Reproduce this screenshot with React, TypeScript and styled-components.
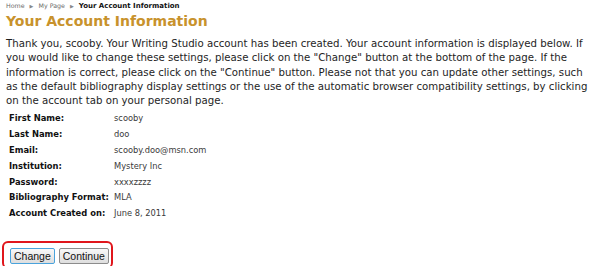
import React from "react";
import styled, { createGlobalStyle } from "styled-components";

const Global = createGlobalStyle`
  html, body { margin: 0; padding: 0; background: #fff; }
  body { font-family: "DejaVu Sans", Verdana, sans-serif; color: #111; }
`;

const Page = styled.div`
  padding: 0 6px 0 6px;
  width: 600px;
  box-sizing: border-box;
`;

const Crumbs = styled.nav`
  display: flex;
  align-items: baseline;
  height: 11px;
  padding-left: 0;
  font-family: "DejaVu Sans", Tahoma, sans-serif;
  line-height: 11px;
`;

const Crumb = styled.span<{ $current?: boolean }>`
  font-size: ${(p) => (p.$current ? "7px" : "6.3px")};
  font-weight: ${(p) => (p.$current ? 700 : 400)};
  color: ${(p) => (p.$current ? "#111" : "#6a6a6a")};
`;

const Sep = styled.span`
  font-size: 5px;
  color: #888;
  margin: 0 5px;
`;

const Title = styled.h1`
  margin: 1px 0 0;
  font-size: 14px;
  line-height: 18px;
  font-weight: 700;
  color: #c8922c;
`;

const Intro = styled.p`
  margin: 7px 0 0;
  font-size: 10.2px;
  line-height: 14.3px;
  color: #1e1e1e;
  white-space: nowrap;
`;

const Info = styled.dl`
  display: grid;
  grid-template-columns: 105px auto;
  margin: 3px 0 0 3px;
  font-size: 8.4px;
  line-height: 15.8px;
`;

const Label = styled.dt`
  font-weight: 700;
  color: #111;
`;

const Value = styled.dd`
  margin: 0;
  font-size: 8.3px;
  color: #3a3a3a;
`;

const ButtonBox = styled.div`
  display: inline-flex;
  gap: 4px;
  margin: 19px 0 0 -4px;
  padding: 5px 2px 3px 6px;
  border: 2px solid #e0161c;
  border-radius: 6px;
`;

const Button = styled.button<{ $focused?: boolean }>`
  font-family: "Liberation Sans", Arial, sans-serif;
  font-size: 10.5px;
  line-height: 14px;
  height: 16px;
  padding: 0 3px;
  color: #111;
  background: linear-gradient(#f8f8f8, #dedede);
  border: 1px solid ${(p) => (p.$focused ? "#4aa3dc" : "#8c8c8c")};
  border-radius: 2px;
`;

const rows: [string, string][] = [
  ["First Name:", "scooby"],
  ["Last Name:", "doo"],
  ["Email:", "scooby.doo@msn.com"],
  ["Institution:", "Mystery Inc"],
  ["Password:", "xxxxzzzz"],
  ["Bibliography Format:", "MLA"],
  ["Account Created on:", "June 8, 2011"],
];

const lines = [
  "Thank you, scooby. Your Writing Studio account has been created. Your account information is displayed below. If",
  'you would like to change these settings, please click on the "Change" button at the bottom of the page. If the',
  'information is correct, please click on the "Continue" button. Please not that you can update other settings, such',
  "as the default bibliography display settings or the use of the automatic browser compatibility settings, by clicking",
  "on the account tab on your personal page.",
];

export default function App() {
  return (
    <Page>
      <Global />
      <Crumbs>
        <Crumb>Home</Crumb>
        <Sep>▶</Sep>
        <Crumb>My Page</Crumb>
        <Sep>▶</Sep>
        <Crumb $current>Your Account Information</Crumb>
      </Crumbs>
      <Title>Your Account Information</Title>
      <Intro>
        {lines.map((l, i) => (
          <React.Fragment key={i}>
            {l}
            {i < lines.length - 1 && <br />}
          </React.Fragment>
        ))}
      </Intro>
      <Info>
        {rows.map(([k, v]) => (
          <React.Fragment key={k}>
            <Label>{k}</Label>
            <Value>{v}</Value>
          </React.Fragment>
        ))}
      </Info>
      <ButtonBox>
        <Button $focused>Change</Button>
        <Button>Continue</Button>
      </ButtonBox>
    </Page>
  );
}
